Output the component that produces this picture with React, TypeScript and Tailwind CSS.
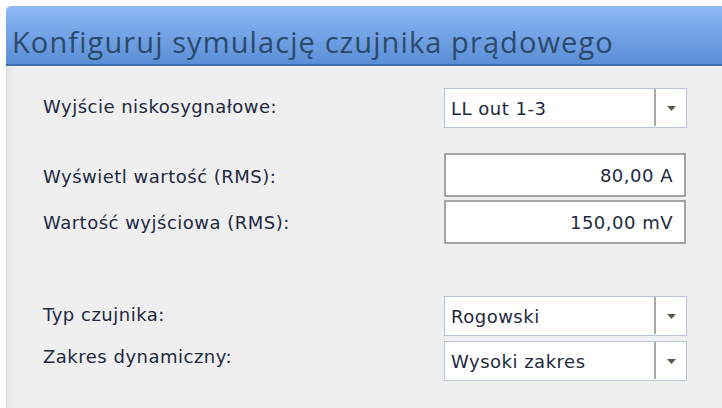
import React from 'react';

const bodyFont = { fontFamily: '"DejaVu Sans", Tahoma, sans-serif', letterSpacing: '0.5px' };

function Combo({ value }: { value: string }) {
  return (
    <div className="flex h-[40px] w-[243px] border border-[#b5c7df] bg-white">
      <div className="flex flex-1 items-center pl-[6px] text-[18px] text-[#1d2940]" style={bodyFont}>
        {value}
      </div>
      <div className="mb-[1px] w-[2px] bg-[#a9a9a9]" />
      <div className="flex w-[30px] items-center justify-center">
        <svg width="9" height="5" viewBox="0 0 9 5">
          <path d="M0 0h9L4.5 5z" fill="#5c5a48" />
        </svg>
      </div>
    </div>
  );
}

function Field({ value }: { value: string }) {
  return (
    <div className="flex h-[44px] w-[242px] items-center justify-end border-2 border-[#a3a3a3] bg-white pr-[11px] text-[18px] text-[#1d2940]" style={bodyFont}>
      {value}
    </div>
  );
}

function Row({
  label,
  children,
  className = '',
  labelClass = '',
}: {
  label: string;
  children: React.ReactNode;
  className?: string;
  labelClass?: string;
}) {
  return (
    <div className={`flex items-center ${className}`}>
      <div className={`w-[437px] pl-[36px] text-[18px] text-[#1d2940] ${labelClass}`} style={bodyFont}>
        {label}
      </div>
      {children}
    </div>
  );
}

export default function App() {
  return (
    <div className="flex h-[408px] w-[722px] flex-col overflow-hidden bg-white pl-[6px] pt-[6px]">
      {/* header bar */}
      <div className="flex h-[60px] items-center rounded-tl-[5px] border-t border-[#9ab8e0] border-b-2 border-b-[#426fae] bg-gradient-to-b from-[#8cb8f5] to-[#5a8ed6] pl-[6px] pt-[12px]">
        <span
          className="text-[29px] leading-none text-[#2c4a6b]"
          style={{ fontFamily: '"Open Sans", "Segoe UI", sans-serif', letterSpacing: '1.1px' }}
        >
          Konfiguruj symulację czujnika prądowego
        </span>
      </div>

      {/* settings body */}
      <div className="flex-1 border-l border-[#dcdcdc] bg-gradient-to-r from-[#e6e6e6] from-0% via-[#efefef] via-[9px] to-[#efefef] pt-[22px]">
        <Row label="Wyjście niskosygnałowe:" labelClass="-mt-[3px]">
          <Combo value="LL out 1-3" />
        </Row>
        <Row label="Wyświetl wartość (RMS):" className="mt-[25px]" labelClass="mt-[3px]">
          <Field value="80,00 A" />
        </Row>
        <Row label="Wartość wyjściowa (RMS):" className="mt-[3px]">
          <Field value="150,00 mV" />
        </Row>
        <Row label="Typ czujnika:" className="mt-[52px]" labelClass="-mt-[4px]">
          <Combo value="Rogowski" />
        </Row>
        <Row label="Zakres dynamiczny:" className="mt-[5px]" labelClass="-mt-[9px]">
          <Combo value="Wysoki zakres" />
        </Row>
      </div>
    </div>
  );
}
